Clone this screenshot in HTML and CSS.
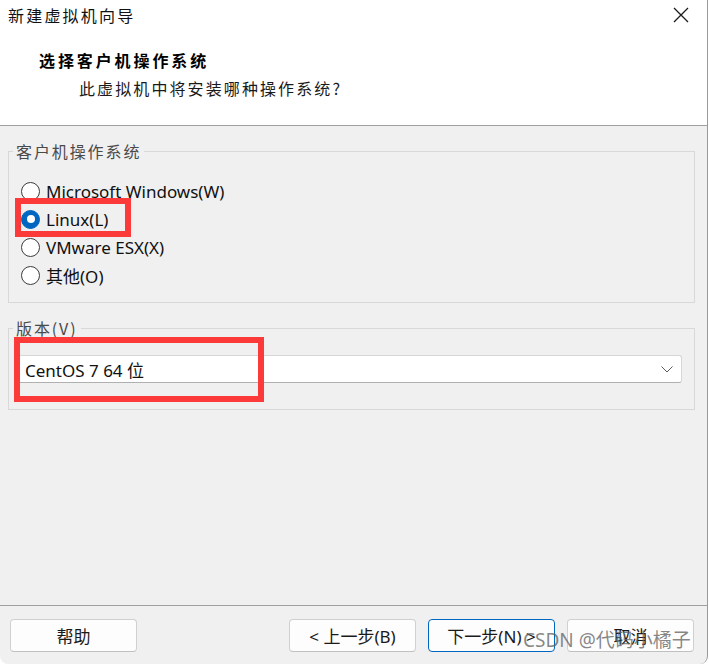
FILE: index.html
```html
<!DOCTYPE html>
<html lang="zh-CN">
<head>
<meta charset="utf-8">
<title>新建虚拟机向导</title>
<link rel="stylesheet" href="styles.css">
</head>
<body>
<div class="window">
  <header class="header">
    <div class="titlebar">
      <span class="title">新建虚拟机向导</span>
      <span class="close" aria-label="关闭">
        <svg width="16" height="16" viewBox="0 0 16 16"><path d="M1 1 L15 15 M15 1 L1 15" stroke="#1a1a1a" stroke-width="1.3" fill="none"/></svg>
      </span>
    </div>
    <h1 class="heading">选择客户机操作系统</h1>
    <p class="subheading">此虚拟机中将安装哪种操作系统?</p>
  </header>

  <main class="content">
    <fieldset class="group group-os">
      <legend class="group-label">客户机操作系统</legend>
      <div class="group-body os-body">
        <div class="radio-row"><span class="radio"></span><span class="radio-text">Microsoft Windows(W)</span></div>
        <div class="radio-row"><span class="radio checked"></span><span class="radio-text">Linux(L)</span></div>
        <div class="radio-row"><span class="radio"></span><span class="radio-text">VMware ESX(X)</span></div>
        <div class="radio-row"><span class="radio"></span><span class="radio-text">其他(O)</span></div>
      </div>
    </fieldset>

    <fieldset class="group group-version">
      <legend class="group-label">版本(V)</legend>
      <div class="group-body version-body">
        <div class="select">
          <span class="select-text">CentOS 7 64 位</span>
          <svg class="chevron" width="12" height="7" viewBox="0 0 12 7"><path d="M0.5 0.5 L6 6 L11.5 0.5" stroke="#5a5a5a" stroke-width="1" fill="none"/></svg>
        </div>
      </div>
    </fieldset>
  </main>

  <footer class="footer">
    <button class="btn">帮助</button>
    <div class="footer-right">
      <button class="btn">&lt; 上一步(B)</button>
      <button class="btn btn-primary">下一步(N) &gt;</button>
      <button class="btn">取消</button>
    </div>
  </footer>

  <div class="mark mark-linux"></div>
  <div class="mark mark-version"></div>
  <div class="watermark">CSDN @代码小橘子</div>
</div>
</body>
</html>
```

FILE: styles.css
```css
* { box-sizing: border-box; }

html, body {
  margin: 0;
  padding: 0;
  background: #ffffff;
}

body {
  font-family: "Noto Sans", "Noto Sans CJK SC", sans-serif;
  color: #1a1a1a;
}

.window {
  position: relative;
  width: 708px;
  height: 664px;
  background: #f0f0f0;
  border-right: 1px solid #9a9a9a;
  border-bottom-right-radius: 8px;
  border-bottom-left-radius: 8px;
  display: flex;
  flex-direction: column;
  overflow: hidden;
}

/* header */
.header {
  height: 126px;
  background: #ffffff;
  border-bottom: 1px solid #a0a0a0;
  display: flex;
  flex-direction: column;
}

.titlebar {
  height: 30px;
  display: flex;
  align-items: center;
  justify-content: space-between;
  padding: 0 18px 0 8px;
}

.title {
  font-family: "Noto Sans CJK SC", sans-serif;
  font-size: 16px;
  letter-spacing: 2.2px;
  color: #111;
}

.close {
  display: flex;
  width: 16px;
  height: 16px;
}

.heading {
  margin: 19px 0 0 39px;
  font-family: "Noto Sans CJK SC", sans-serif;
  font-size: 16px;
  font-weight: 700;
  letter-spacing: 2.9px;
  line-height: 22px;
  color: #000;
}

.subheading {
  margin: 6px 0 0 79px;
  font-family: "Noto Sans CJK SC", sans-serif;
  font-size: 16px;
  letter-spacing: 2.1px;
  line-height: 22px;
  color: #1a1a1a;
}

/* content */
.content {
  display: flex;
  flex-direction: column;
  padding: 0 12px 0 8px;
}

.group {
  margin: 0;
  padding: 0;
  border: 1px solid #d8d8d8;
  min-width: 0;
}

.group-label {
  margin-left: 4px;
  padding: 0 3px;
  font-family: "Noto Sans CJK SC", sans-serif;
  font-size: 16px;
  letter-spacing: 1.9px;
  line-height: 20px;
  height: 20px;
  color: #4a4a4a;
}

.group-os { margin-top: 15px; }

.os-body {
  padding: 16px 12px 13px 12px;
}

.radio-row {
  height: 28px;
  display: flex;
  align-items: center;
  gap: 6px;
}

.radio {
  width: 19px;
  height: 19px;
  border-radius: 50%;
  border: 1px solid #3c3c3c;
  background: #ffffff;
  flex: none;
  display: flex;
  align-items: center;
  justify-content: center;
}

.radio.checked {
  background: #0067c0;
  border-color: #0067c0;
}

.radio.checked::after {
  content: "";
  width: 8px;
  height: 8px;
  border-radius: 50%;
  background: #ffffff;
}

.radio-text {
  font-size: 17px;
  color: #111;
}

.group-version { margin-top: 15px; }

.version-body {
  padding: 17px 12px 26px 8px;
}

.select {
  height: 28px;
  background: #ffffff;
  border: 1px solid #d6d6d6;
  border-bottom-color: #b0b0b0;
  border-radius: 3px;
  display: flex;
  align-items: center;
  justify-content: space-between;
  padding: 0 8px 0 7px;
}

.select-text {
  font-size: 17px;
  color: #111;
}

/* footer */
.footer {
  margin-top: auto;
  height: 59px;
  border-top: 1px solid #a0a0a0;
  display: flex;
  justify-content: space-between;
  align-items: flex-start;
  padding: 13px 13px 0 10px;
}

.footer-right {
  display: flex;
  gap: 12px;
}

.btn {
  width: 127px;
  height: 33px;
  background: #fdfdfd;
  border: 1px solid #d0d0d0;
  border-bottom-color: #c0c0c0;
  border-radius: 4px;
  font-family: "Noto Sans", "Noto Sans CJK SC", sans-serif;
  font-size: 17px;
  color: #1a1a1a;
  padding: 0;
}

.btn-primary {
  border: 1.5px solid #0067c0;
}

/* annotation overlays */
.mark {
  position: absolute;
  border: 6px solid #fc3a3a;
}

.mark-linux {
  left: 15px;
  top: 198px;
  width: 116px;
  height: 39px;
}

.mark-version {
  left: 14px;
  top: 337px;
  width: 250px;
  height: 65px;
}

.watermark {
  position: absolute;
  left: 523px;
  top: 627px;
  font-family: "Noto Sans", "Noto Sans CJK SC", sans-serif;
  font-size: 19px;
  line-height: 26px;
  color: rgba(95, 95, 95, 0.75);
  white-space: nowrap;
}
```
